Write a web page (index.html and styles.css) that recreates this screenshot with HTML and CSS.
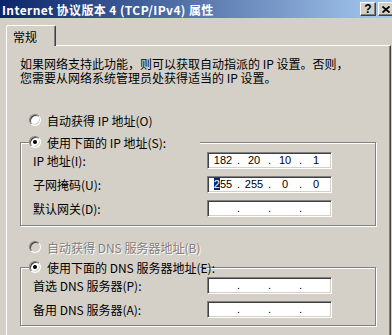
FILE: index.html
```html
<!DOCTYPE html>
<html lang="zh-CN">
<head>
    <meta charset="UTF-8">
    <title>Internet 协议版本 4 (TCP/IPv4) 属性</title>
    <link rel="stylesheet" href="styles.css">
</head>
<body>
    <div class="titlebar">
        <span class="title">Internet 协议版本 4 (TCP/IPv4) 属性</span>
        <div class="caption-btns">
            <span class="cbtn help">?</span>
            <span class="cbtn close">
                <svg width="8" height="7" viewBox="0 0 8 7"><path d="M0.5 0.5L7.5 6.5M7.5 0.5L0.5 6.5" stroke="#000" stroke-width="1.7" fill="none"/></svg>
            </span>
        </div>
    </div>

    <div class="tabs">
        <div class="tab">常规</div>
    </div>

    <div class="panel">
        <p class="intro">如果网络支持此功能，则可以获取自动指派的 IP 设置。否则，<br>您需要从网络系统管理员处获得适当的 IP 设置。</p>

        <div class="radio-row first"><span class="radio"></span>自动获得 IP 地址(O)</div>

        <fieldset class="group">
            <legend class="group-legend"><span class="radio checked"></span>使用下面的 IP 地址(S):</legend>
            <div class="field-row">
                <span class="field-label">IP 地址(I):</span>
                <div class="ipbox">
                    <span class="oct">182</span><span class="dot">.</span><span class="oct">20</span><span class="dot">.</span><span class="oct">10</span><span class="dot">.</span><span class="oct">1</span>
                </div>
            </div>
            <div class="field-row">
                <span class="field-label">子网掩码(U):</span>
                <div class="ipbox">
                    <span class="oct"><span class="sel">2</span>55</span><span class="dot">.</span><span class="oct">255</span><span class="dot">.</span><span class="oct">0</span><span class="dot">.</span><span class="oct">0</span>
                </div>
            </div>
            <div class="field-row">
                <span class="field-label">默认网关(D):</span>
                <div class="ipbox">
                    <span class="oct"></span><span class="dot">.</span><span class="oct"></span><span class="dot">.</span><span class="oct"></span><span class="dot">.</span><span class="oct"></span>
                </div>
            </div>
        </fieldset>

        <div class="radio-row disabled"><span class="radio"></span>自动获得 DNS 服务器地址(B)</div>

        <fieldset class="group dns">
            <legend class="group-legend"><span class="radio checked"></span>使用下面的 DNS 服务器地址(E):</legend>
            <div class="field-row">
                <span class="field-label">首选 DNS 服务器(P):</span>
                <div class="ipbox">
                    <span class="oct"></span><span class="dot">.</span><span class="oct"></span><span class="dot">.</span><span class="oct"></span><span class="dot">.</span><span class="oct"></span>
                </div>
            </div>
            <div class="field-row">
                <span class="field-label">备用 DNS 服务器(A):</span>
                <div class="ipbox">
                    <span class="oct"></span><span class="dot">.</span><span class="oct"></span><span class="dot">.</span><span class="oct"></span><span class="dot">.</span><span class="oct"></span>
                </div>
            </div>
        </fieldset>
    </div>
</body>
</html>
```

FILE: styles.css
```css
* {
    margin: 0;
    padding: 0;
    box-sizing: border-box;
}

body {
    font-family: "Noto Sans CJK SC", sans-serif;
    font-size: 12px;
    line-height: 13px;
    color: #000;
    background: #d4d0c8;
    height: 335px;
    overflow: hidden;
}

/* title bar */
.titlebar {
    height: 18px;
    display: flex;
    align-items: center;
    padding-left: 2px;
    background: linear-gradient(90deg, #0a246a, #a6caf0);
}

.title {
    flex: 1;
    color: #fff;
    font-weight: 700;
    letter-spacing: 0.4px;
    white-space: nowrap;
}

.caption-btns {
    display: flex;
    gap: 2px;
    margin-right: -2px;
}

.cbtn {
    width: 16px;
    height: 14px;
    display: flex;
    align-items: center;
    justify-content: center;
    background: #d4d0c8;
    border: 1px solid;
    border-color: #fff #404040 #404040 #fff;
    box-shadow: inset -1px -1px 0 #808080;
}

.help {
    font-family: "Liberation Sans", sans-serif;
    font-weight: 700;
    font-size: 12px;
}

/* tab strip */
.tabs {
    display: flex;
    padding: 7px 0 0 6px;
}

.tab {
    position: relative;
    z-index: 1;
    width: 50px;
    height: 21px;
    margin-bottom: -1px;
    padding: 4px 0 0 6px;
    background: #d4d0c8;
    border-top: 1px solid #fff;
    border-left: 1px solid #fff;
    border-right: 1px solid #404040;
    border-radius: 2px 2px 0 0;
    box-shadow: inset -1px 0 0 #808080;
}

/* page body */
.panel {
    margin-left: 6px;
    width: 385px;
    height: 290px;
    padding: 11px 0 0 13px;
    border-top: 1px solid #fff;
    border-left: 1px solid #fff;
    border-right: 1px solid #404040;
    box-shadow: inset -1px 0 0 #808080;
}

.intro {
    line-height: 14px;
    white-space: nowrap;
}

.radio-row {
    display: flex;
    align-items: center;
    gap: 6px;
    height: 16px;
    padding-left: 9px;
}

.radio-row.first {
    margin-top: 27px;
}

.radio-row.disabled {
    margin-top: 13px;
    color: #808080;
    text-shadow: 1px 1px 0 #fff;
}

.radio {
    position: relative;
    width: 12px;
    height: 12px;
    flex: none;
    border-radius: 50%;
    background: #fff;
    border: 1px solid;
    border-color: #808080 #fff #fff #808080;
    box-shadow: inset 1px 1px 0 #404040, inset -1px -1px 0 #d4d0c8;
}

.disabled .radio {
    background: #d4d0c8;
}

.radio.checked::after {
    content: "";
    position: absolute;
    left: 3px;
    top: 3px;
    width: 4px;
    height: 4px;
    border-radius: 50%;
    background: #000;
}

/* group boxes */
.group {
    width: 356px;
    min-inline-size: 0;
    margin-top: 6px;
    padding: 2px 0 8px;
    border: 1px solid #808080;
    box-shadow: inset 1px 1px 0 #fff, 1px 1px 0 #fff;
}

.group.dns {
    margin-top: 4px;
    padding-bottom: 7px;
}

.group-legend {
    display: flex;
    align-items: center;
    gap: 6px;
    width: 171px;
    height: 16px;
    margin-left: 8px;
    padding: 0;
    background: #d4d0c8;
    white-space: nowrap;
}

.field-row {
    display: flex;
    align-items: center;
    height: 17px;
}

.field-row + .field-row {
    margin-top: 7px;
}

.field-label {
    width: 186px;
    padding-left: 12px;
    white-space: nowrap;
}

.ipbox {
    width: 125px;
    height: 17px;
    display: flex;
    align-items: center;
    padding-left: 2px;
    background: #fff;
    border: 1px solid;
    border-color: #808080 #fff #fff #808080;
    box-shadow: inset 1px 1px 0 #404040, inset -1px -1px 0 #d4d0c8;
    font-family: "Liberation Sans", sans-serif;
    font-size: 11px;
}

.oct {
    width: 26px;
    text-align: center;
}

.dot {
    width: 5px;
    text-align: center;
}

.sel {
    background: #0a246a;
    color: #fff;
}
```
